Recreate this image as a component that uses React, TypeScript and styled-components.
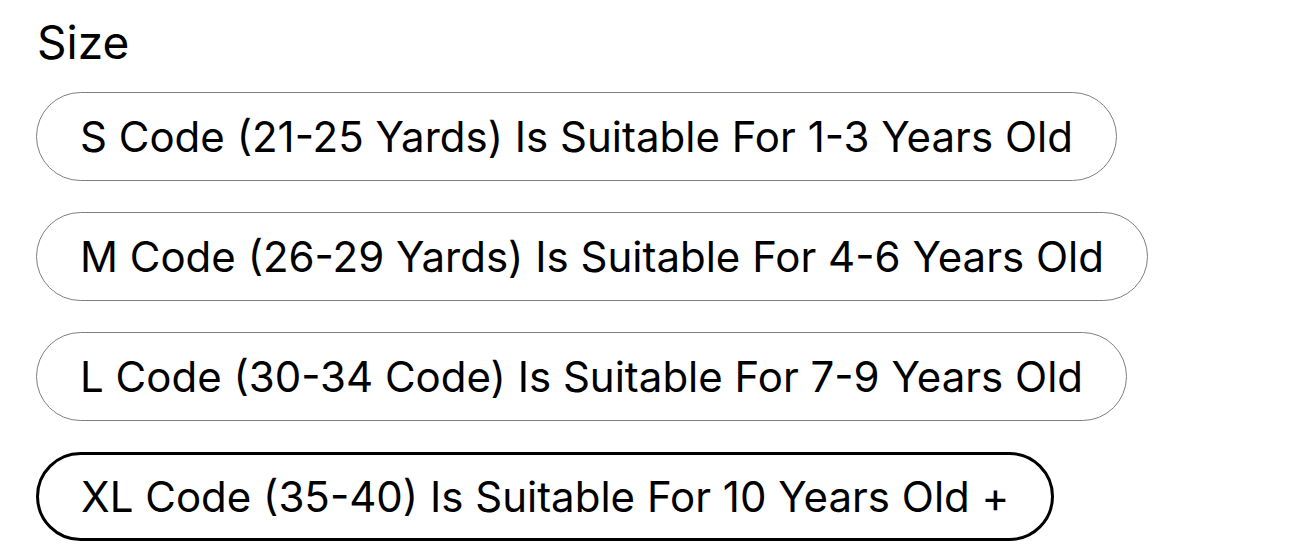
import React from "react";
import styled, { createGlobalStyle } from "styled-components";

const Global = createGlobalStyle`
  html, body { margin: 0; padding: 0; background: #ffffff; }
  body { font-family: Inter, "Liberation Sans", Arial, sans-serif; color: #000; }
`;

const Page = styled.div`
  padding: 16px 0 0 36px;
  display: flex;
  flex-direction: column;
`;

const Label = styled.div`
  font-size: 46px;
  line-height: 52px;
  margin-left: 1px;
  margin-bottom: 24px;
`;

const Options = styled.div`
  display: flex;
  flex-direction: column;
  align-items: flex-start;
  gap: 31px;
`;

const Pill = styled.button<{ $selected?: boolean }>`
  box-sizing: border-box;
  height: 89px;
  padding: 0 ${(p) => (p.$selected ? 42 : 43)}px;
  border-radius: 45px;
  border: ${(p) => (p.$selected ? "3px solid #000" : "1px solid #7f7f7f")};
  background: #fff;
  color: #000;
  font-family: Inter, "Liberation Sans", Arial, sans-serif;
  font-size: 42px;
  white-space: nowrap;
  display: flex;
  align-items: center;
  cursor: pointer;
`;

const sizes = [
  "S Code (21-25 Yards) Is Suitable For 1-3 Years Old",
  "M Code (26-29 Yards) Is Suitable For 4-6 Years Old",
  "L Code (30-34 Code) Is Suitable For 7-9 Years Old",
  "XL Code (35-40) Is Suitable For 10 Years Old +",
];

export default function App() {
  return (
    <>
      <Global />
      <Page>
        <Label>Size</Label>
        <Options>
          {sizes.map((s, i) => (
            <Pill key={s} $selected={i === 3}>
              {s}
            </Pill>
          ))}
        </Options>
      </Page>
    </>
  );
}
